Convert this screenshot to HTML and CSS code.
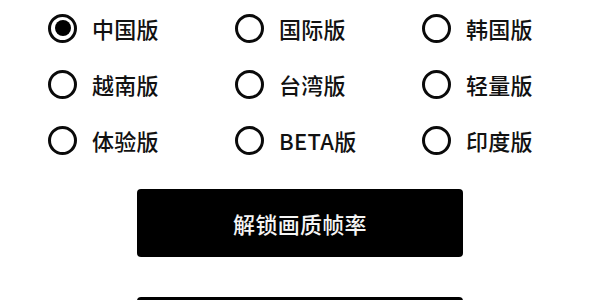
FILE: index.html
```html
<!DOCTYPE html>
<html lang="zh">
<head>
<meta charset="utf-8">
<link rel="stylesheet" href="styles.css">
</head>
<body>
<div class="page">
  <div class="options">
    <label class="opt"><span class="radio checked"></span><span class="lbl">中国版</span></label>
    <label class="opt"><span class="radio"></span><span class="lbl">国际版</span></label>
    <label class="opt"><span class="radio"></span><span class="lbl">韩国版</span></label>
    <label class="opt"><span class="radio"></span><span class="lbl">越南版</span></label>
    <label class="opt"><span class="radio"></span><span class="lbl">台湾版</span></label>
    <label class="opt"><span class="radio"></span><span class="lbl">轻量版</span></label>
    <label class="opt"><span class="radio"></span><span class="lbl">体验版</span></label>
    <label class="opt"><span class="radio"></span><span class="lbl">BETA版</span></label>
    <label class="opt"><span class="radio"></span><span class="lbl">印度版</span></label>
  </div>
  <div class="actions">
    <button class="btn">解锁画质帧率</button>
    <button class="btn" aria-label="更多"></button>
  </div>
</div>
</body>
</html>
```
FILE: styles.css
```css
* { box-sizing: border-box; }
html, body { margin: 0; padding: 0; background: #fff; }
body {
  width: 600px;
  height: 300px;
  overflow: hidden;
  font-family: "Noto Sans CJK SC", "Noto Sans", sans-serif;
  color: #111;
}
.page {
  padding-top: 0;
}
.options {
  display: grid;
  grid-template-columns: 187px 187px 187px;
  grid-auto-rows: 56px;
  padding-left: 48px;
}
.opt {
  display: flex;
  align-items: center;
  gap: 15px;
}
.radio {
  width: 29px;
  height: 29px;
  border: 3px solid #0a0a0a;
  border-radius: 50%;
  display: flex;
  align-items: center;
  justify-content: center;
  flex: none;
}
.radio.checked::after {
  content: "";
  width: 16px;
  height: 16px;
  border-radius: 50%;
  background: #000;
}
.lbl {
  font-size: 22px;
  font-weight: 500;
  line-height: 28px;
  letter-spacing: 0.3px;
}
.actions {
  display: flex;
  flex-direction: column;
  align-items: center;
  gap: 40px;
  margin-top: 21px;
}
.btn {
  width: 326px;
  height: 68px;
  border: none;
  border-radius: 4px;
  background: #000;
  color: #f5f5f5;
  font-family: "Noto Sans CJK SC", "Noto Sans", sans-serif;
  font-size: 22px;
  font-weight: 500;
  letter-spacing: 0.3px;
  flex: none;
}
```
